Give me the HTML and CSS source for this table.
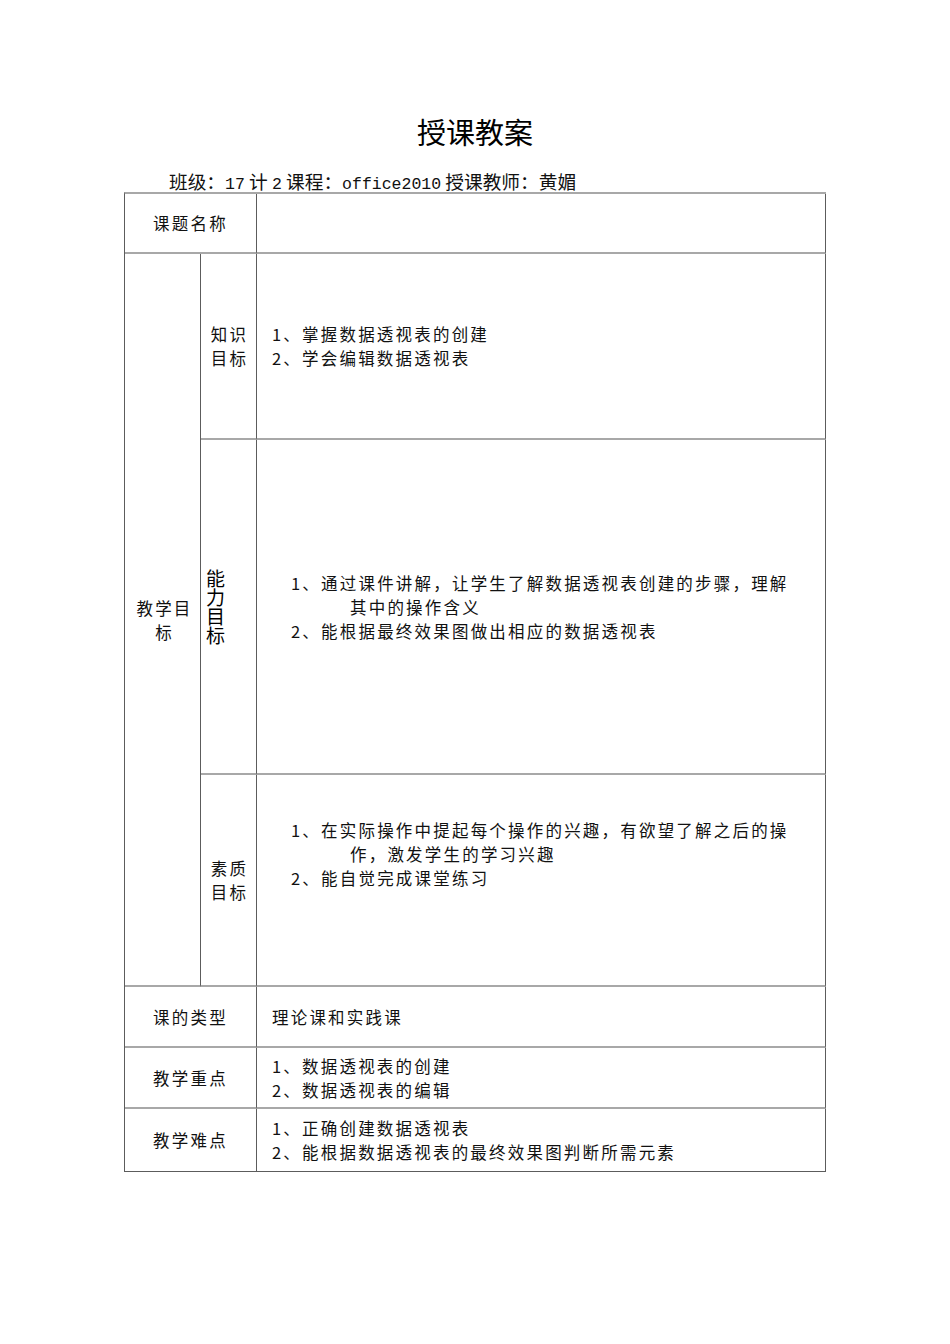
FILE: index.html
```html
<!DOCTYPE html>
<html lang="zh-CN">
<head>
<meta charset="utf-8">
<title>授课教案</title>
<link rel="stylesheet" href="styles.css">
</head>
<body>
<div class="page">
  <h1 class="title">授课教案</h1>
  <p class="meta">班级：<span class="lat">17</span> 计 <span class="lat">2</span> 课程：<span class="lat">office2010</span> 授课教师：黄媚</p>
  <div class="plan">
    <div class="cell label wide">课题名称</div>
    <div class="cell content"></div>

    <div class="cell label goal">教学目标</div>
    <div class="cell sub">知识<br>目标</div>
    <div class="cell content">
      <div class="lines">
        <span class="line">1、掌握数据透视表的创建</span>
        <span class="line">2、学会编辑数据透视表</span>
      </div>
    </div>

    <div class="cell sub vert"><span class="vtext">能力目标</span></div>
    <div class="cell content list">
      <div class="lines">
        <span class="line">1、通过课件讲解，让学生了解数据透视表创建的步骤，理解</span>
        <span class="line cont">其中的操作含义</span>
        <span class="line">2、能根据最终效果图做出相应的数据透视表</span>
      </div>
    </div>

    <div class="cell sub">素质<br>目标</div>
    <div class="cell content list raised">
      <div class="lines">
        <span class="line">1、在实际操作中提起每个操作的兴趣，有欲望了解之后的操</span>
        <span class="line cont">作，激发学生的学习兴趣</span>
        <span class="line">2、能自觉完成课堂练习</span>
      </div>
    </div>

    <div class="cell label wide">课的类型</div>
    <div class="cell content">
      <div class="lines"><span class="line">理论课和实践课</span></div>
    </div>

    <div class="cell label wide">教学重点</div>
    <div class="cell content">
      <div class="lines">
        <span class="line">1、数据透视表的创建</span>
        <span class="line">2、数据透视表的编辑</span>
      </div>
    </div>

    <div class="cell label wide last">教学难点</div>
    <div class="cell content last">
      <div class="lines">
        <span class="line">1、正确创建数据透视表</span>
        <span class="line">2、能根据数据透视表的最终效果图判断所需元素</span>
      </div>
    </div>
  </div>
</div>
</body>
</html>
```

FILE: styles.css
```css
html, body {
  margin: 0;
  padding: 0;
  background: #ffffff;
}

body {
  font-family: "Noto Sans CJK SC", "Noto Sans", sans-serif;
  color: #111111;
}

.page {
  width: 702px;
  margin-left: 124px;
  padding-top: 113px;
}

.title {
  margin: 0;
  font-size: 29px;
  line-height: 36px;
  font-weight: normal;
  text-align: center;
  color: #000000;
}

.meta {
  margin: 21px 0 0 0;
  padding-left: 45px;
  font-size: 18.7px;
  line-height: 22px;
  height: 22px;
  white-space: nowrap;
  color: #111111;
}

.lat {
  font-family: "Liberation Mono", monospace;
  font-size: 16.5px;
}

.plan {
  display: grid;
  grid-template-columns: 76px 56px 1fr;
  grid-template-rows: 60px 186px 335px 212px 61px 61px 63px;
  border-left: 1px solid #5c5c5c;
  border-top: 2px solid #a8a8a8;
  font-size: 16.5px;
  line-height: 24px;
  letter-spacing: 2.2px;
}

.cell {
  box-sizing: border-box;
  border-right: 1px solid #5c5c5c;
  border-bottom: 2px solid #a8a8a8;
  display: flex;
  flex-direction: column;
  justify-content: center;
}

.cell.last {
  border-bottom: 1px solid #5c5c5c;
}

.label {
  text-align: center;
  align-items: center;
}

.wide {
  grid-column: 1 / span 2;
}

.goal {
  grid-column: 1;
  grid-row: 2 / span 3;
  padding: 0 4px 0 8px;
}

.sub {
  grid-column: 2;
  text-align: center;
  align-items: center;
  padding-left: 2px;
}

.sub.vert {
  align-items: flex-start;
  padding-left: 4px;
}

.vtext {
  writing-mode: vertical-rl;
  text-orientation: upright;
  font-size: 19px;
  line-height: 21px;
  letter-spacing: 0;
  color: #000000;
}

.content {
  grid-column: 3;
  padding-left: 15px;
}

.content.list {
  padding-left: 34px;
}

.content.raised {
  padding-bottom: 52px;
}

.lines {
  display: flex;
  flex-direction: column;
}

.line {
  display: block;
  white-space: nowrap;
}

.line.cont {
  padding-left: 59px;
}
```
